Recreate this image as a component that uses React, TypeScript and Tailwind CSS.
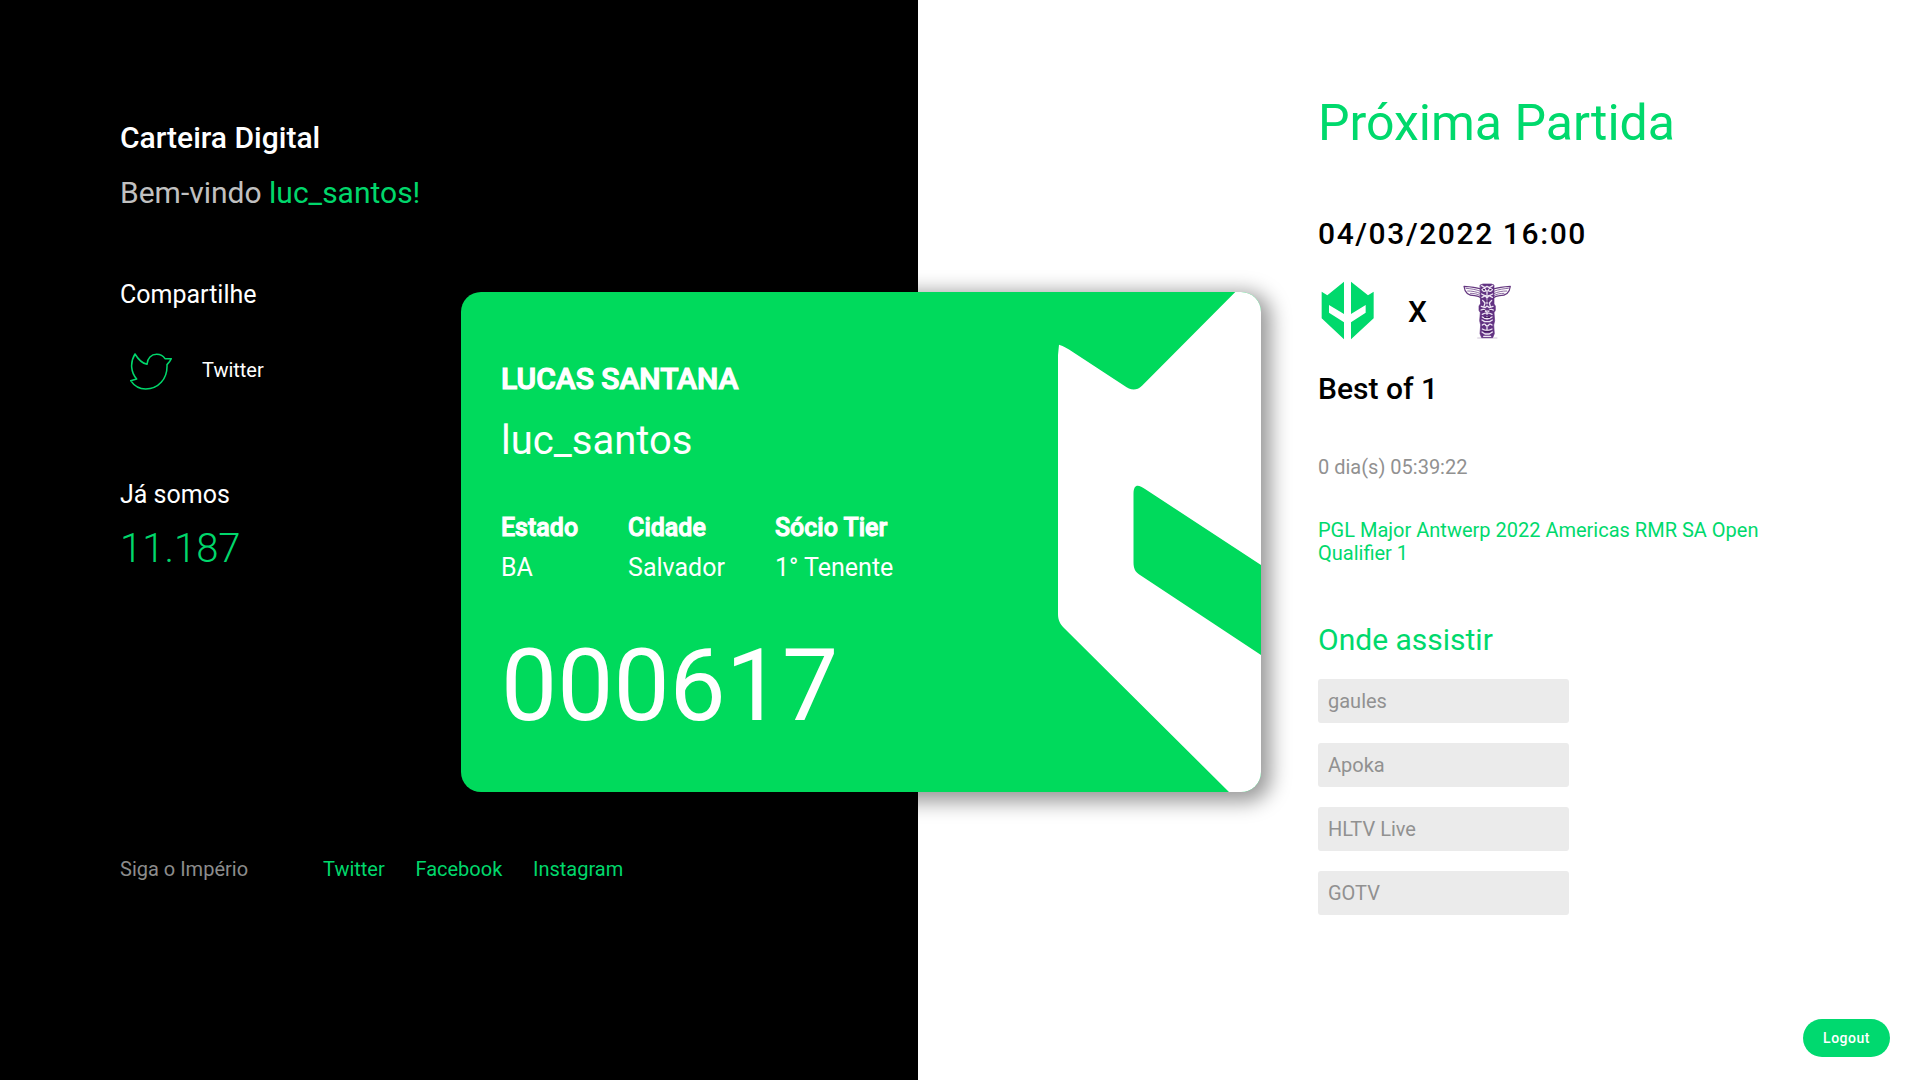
const follow = ["Twitter", "Facebook", "Instagram"];
const channels = ["gaules", "Apoka", "HLTV Live", "GOTV"];
const member = [
  { label: "Estado", value: "BA" },
  { label: "Cidade", value: "Salvador" },
  { label: "Sócio Tier", value: "1° Tenente" },
];

function TwitterIcon() {
  return (
    <svg className="ml-[10px] h-[38px] w-[42px]" viewBox="90 70 126 114" fill="none" stroke="#00d76b" strokeWidth="4.6" strokeLinejoin="round">
      <path d="M105 73C114 88 127 101 141 104C142 85 154 74 170 74C182 74 190 79 195 87L214 87C211 94 206 100 201 105C203 149 174 178 137 178C118 178 102 168 92 153L110 148C93 129 89 99 105 73Z" />
    </svg>
  );
}

function ImperialLogo() {
  return (
    <svg className="h-[59px] w-[54px]" viewBox="34 34 162 177" fill="#00d96c">
      <path d="M36 66L53 77L103 36V133L58 106V129L103 158V209L36 146Z" />
      <path d="M192 66L175 77L124 36V133L168 106V129L124 158V209L192 146Z" />
    </svg>
  );
}

function TotemLogo() {
  return (
    <svg className="h-[56px] w-[50px]" viewBox="455 38 150 168" fill="none" strokeLinecap="round" strokeLinejoin="round">
      <path d="M502 203H560" stroke="#cfc4d6" strokeWidth="3" />
      <g fill="#fff" stroke="#64367f" strokeWidth="3.4">
        <path d="M512 56C497 51 480 49 461 48C463 66 475 76 493 76C501 77 507 79 513 83Z" />
        <path d="M549 56C564 51 581 49 600 48C598 66 586 76 568 76C560 77 554 79 548 83Z" />
      </g>
      <g stroke="#7b5493" strokeWidth="2.6">
        <path d="M467 54C480 55 496 57 511 63M472 62C485 62 498 64 511 70M480 69C491 69 502 71 511 76" />
        <path d="M594 54C581 55 565 57 550 63M589 62C576 62 563 64 550 70M581 69C570 69 559 71 550 76" />
      </g>
      <path d="M510 44L518 41H543L551 44V101L555 107V120L551 127L553 151L550 164L552 190L547 202H514L509 190L511 164L508 151L510 127L506 120V107L510 101Z" fill="#623282" stroke="#623282" strokeWidth="2" />
      <g stroke="#eee5f3" strokeWidth="4">
        <path d="M514 46L524 52L530 48L537 52L547 46M515 58Q523 51 527 61Q520 66 515 58M546 58Q538 51 534 61Q541 66 546 58" />
        <path d="M530 60V72M514 71Q530 82 547 71M515 81L525 76L530 83L536 76L546 81" />
        <path d="M517 90L524 98L521 108M544 90L537 98L540 108M530 89V100M513 108L524 112L530 107L537 112L548 108" />
        <path d="M512 119Q521 114 526 123M549 119Q540 114 535 123M530 121V132M516 132Q530 123 545 132" />
        <path d="M516 140Q530 151 545 140M515 149L523 154H538L546 149M530 139V146" />
        <path d="M516 164Q523 158 527 166M545 164Q538 158 534 166M530 165V177M516 176Q530 185 545 176M515 185L524 191H537L546 185M520 198H541" />
      </g>
      <path d="M519 58H523M538 58H542M527 92H534M519 121H523M538 121H542M523 141H538M521 183H540" stroke="#391052" strokeWidth="3" />
    </svg>
  );
}

function CardEmblem() {
  return (
    <svg className="absolute right-0 top-0 h-[500px] w-[204px]" viewBox="596 0 204 500">
      <path
        fill="#fff"
        d="M774.3 0H800V273L684 197C678 193 672.6 191 672.5 202V270C672.5 276 674 280 679 283L800 363V500H768L603 336C599 332 597 328 597 322V63L598 52.7Q600 53 608 57.5L663.3 93.7C669 98 675 99.5 681 93.7Z"
      />
    </svg>
  );
}

function MemberCard() {
  return (
    <section className="absolute left-[461px] top-[292px] h-[500px] w-[800px] rounded-[20px] bg-[#00da5c] text-white shadow-[5px_5px_20px_5px_rgba(0,0,0,0.4)]">
      <div className="relative h-full overflow-hidden rounded-[20px] px-10 pt-[69px]">
        <CardEmblem />
        <h2 className="text-[30px] font-medium leading-[35px] [-webkit-text-stroke:1.2px_white]">LUCAS SANTANA</h2>
        <p className="mt-[21px] text-[40px] leading-[47px]">luc_santos</p>
        <dl className="mt-[49px] flex gap-[50px] text-[25px] leading-[29px]">
          {member.map((m) => (
            <div key={m.label}>
              <dt className="font-medium [-webkit-text-stroke:1px_white]">{m.label}</dt>
              <dd className="mt-[11px]">{m.value}</dd>
            </div>
          ))}
        </dl>
        <p className="mt-[45px] text-[100px] leading-[117px]">000617</p>
      </div>
    </section>
  );
}

export default function App() {
  return (
    <main className="relative flex h-[1080px] w-[1920px] overflow-hidden bg-white font-['Roboto',sans-serif]">
      <section className="flex w-[918px] flex-col bg-black pl-[120px] pt-[120px] text-white">
        <h1 className="text-[30px] font-medium leading-[35px]">Carteira Digital</h1>
        <p className="mt-5 text-[30px] leading-[35px] text-[#c0c0c0]">
          Bem-vindo <span className="text-[#00d76b]">luc_santos!</span>
        </p>
        <h2 className="mt-[70px] text-[25px] leading-[29px]">Compartilhe</h2>
        <a className="mt-[44px] flex h-[38px] items-start gap-[30px] text-[20px] leading-6">
          <TwitterIcon />
          <span className="mt-[5px]">Twitter</span>
        </a>
        <h2 className="mt-[89px] text-[25px] leading-[29px]">Já somos</h2>
        <p className="mt-4 text-[40px] font-light leading-[47px] text-[#00d76b]">11.187</p>
        <footer className="mt-[285px] flex text-[20px] leading-6">
          <span className="w-[203px] text-[#8c8c8c]">Siga o Império</span>
          <nav className="flex gap-[30.7px] text-[#00d76b]">
            {follow.map((f) => (
              <a key={f}>{f}</a>
            ))}
          </nav>
        </footer>
      </section>

      <section className="flex flex-1 flex-col pl-[400px] pr-[120px] pt-[94px] text-black">
        <h1 className="text-[50px] leading-[58px] text-[#00d96c]">Próxima Partida</h1>
        <p className="mt-16 text-[30px] font-medium leading-[35px] tracking-[1.6px]">04/03/2022 16:00</p>
        <div className="mt-[30px] flex h-[60px] items-start">
          <div className="ml-[3px]">
            <ImperialLogo />
          </div>
          <span className="ml-[33px] mt-[13px] w-[20px] text-[30px] font-medium leading-[35px]">X</span>
          <div className="ml-[34px] mt-[2px]">
            <TotemLogo />
          </div>
        </div>
        <p className="mt-[30px] text-[30px] font-medium leading-[35px]">Best of 1</p>
        <p className="mt-[49px] text-[20px] leading-6 text-[#919191]">0 dia(s) 05:39:22</p>
        <p className="mt-[40px] w-[450px] text-[20px] leading-[23px] text-[#00d96c]">
          PGL Major Antwerp 2022 Americas RMR SA Open Qualifier 1
        </p>
        <h2 className="mt-[57px] text-[30px] leading-[35px] text-[#00d96c]">Onde assistir</h2>
        <ul className="mt-[22px] flex flex-col gap-5 text-[20px] leading-6 text-[#919191]">
          {channels.map((c) => (
            <li key={c} className="h-11 w-[251px] rounded-[3px] bg-[#ebebeb] px-[10px] py-[10px]">
              {c}
            </li>
          ))}
        </ul>
      </section>

      <MemberCard />

      <button className="absolute bottom-[23px] right-[30px] flex h-[38px] w-[87px] items-center justify-center rounded-full bg-[#00d96f] text-[14px] font-medium leading-4 tracking-[0.5px] text-white">
        Logout
      </button>
    </main>
  );
}
